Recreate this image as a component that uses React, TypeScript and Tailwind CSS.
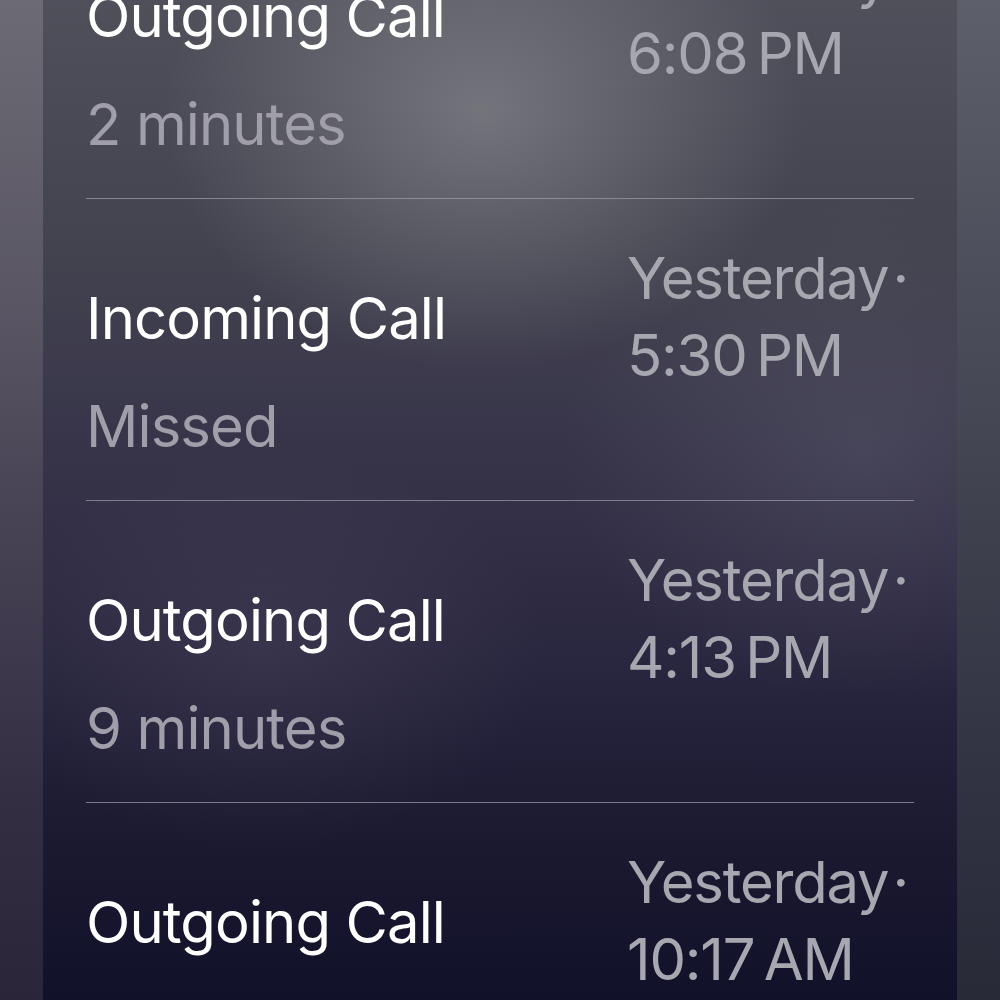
import React from 'react'

type Call = {
  title: string
  detail: string
  day: string
  time: string
}

const calls: Call[] = [
  { title: 'Outgoing Call', detail: '2 minutes', day: 'Yesterday', time: '6:08\u202FPM' },
  { title: 'Incoming Call', detail: 'Missed', day: 'Yesterday', time: '5:30\u202FPM' },
  { title: 'Outgoing Call', detail: '9 minutes', day: 'Yesterday', time: '4:13\u202FPM' },
  { title: 'Outgoing Call', detail: '', day: 'Yesterday', time: '10:17\u202FAM' },
]

function CallRow({ call }: { call: Call }) {
  return (
    <div className="flex h-[302px] shrink-0 border-b border-[#9a9aa4]/75">
      <div className="flex-1 pt-[81px] tracking-[-0.9px]">
        <p className="text-[58px] leading-[77px] text-white">{call.title}</p>
        {call.detail && (
          <p className="mt-[31px] text-[58px] leading-[77px] text-[#a09ea9]">
            {call.detail}
          </p>
        )}
      </div>
      <div className="w-[287px] pt-[41px] text-[58px] leading-[77px] tracking-[-1.2px] text-[#a7a7b0]">
        <p>
          {call.day}
          <span className="ml-[4px]">·</span>
        </p>
        <p>{call.time}</p>
      </div>
    </div>
  )
}

export default function App() {
  return (
    <div
      className="flex h-[1000px] w-[1000px] overflow-hidden bg-[#2a2838]"
      style={{ fontFamily: 'Inter, "Noto Sans", sans-serif' }}
    >
      <div className="w-[43px] shrink-0 bg-[linear-gradient(180deg,#6c6b74_0%,#5a5664_30%,#454052_55%,#332e42_80%,#2a2538_100%)]" />
      <div className="relative flex-1 overflow-hidden bg-[linear-gradient(180deg,#4f505a_0%,#43434f_25%,#37344a_45%,#2a2740_65%,#1a1930_85%,#11112a_100%)]">
        <div className="pointer-events-none absolute inset-0 bg-[radial-gradient(ellipse_320px_260px_at_440px_110px,rgba(150,150,155,0.55),rgba(150,150,155,0)_100%)]" />
        <div className="pointer-events-none absolute inset-0 bg-[radial-gradient(ellipse_300px_250px_at_820px_450px,rgba(120,120,135,0.25),rgba(120,120,135,0)_100%)]" />
        <div className="pointer-events-none absolute inset-0 bg-[radial-gradient(ellipse_280px_200px_at_220px_650px,rgba(110,105,125,0.2),rgba(110,105,125,0)_100%)]" />
        <div className="relative mt-[-103px] flex flex-col px-[43px]">
          {calls.map((call, i) => (
            <CallRow key={i} call={call} />
          ))}
        </div>
      </div>
      <div className="w-[43px] shrink-0 bg-[linear-gradient(180deg,#5d6069_0%,#4b4e5a_30%,#3d3f4d_55%,#313241_80%,#292a38_100%)]" />
    </div>
  )
}
